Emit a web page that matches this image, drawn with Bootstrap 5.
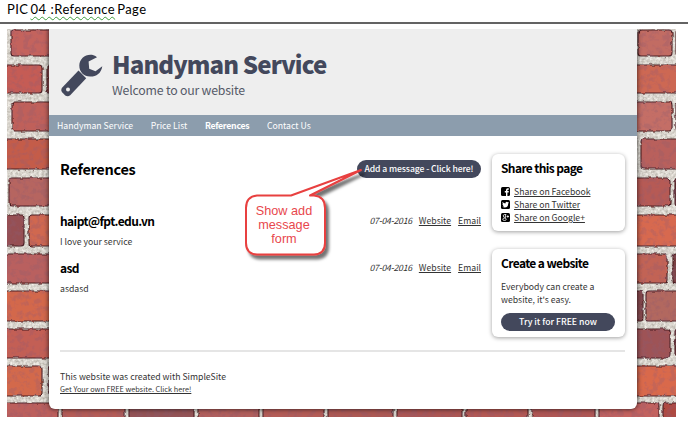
<!DOCTYPE html>
<html lang="en">
<head>
<meta charset="utf-8">
<meta name="viewport" content="width=device-width, initial-scale=1">
<title>Handyman Service - References</title>
<link href="https://cdn.jsdelivr.net/npm/bootstrap@5.3.0/dist/css/bootstrap.min.css" rel="stylesheet">
<style>
  body { width: 688px; height: 422px; overflow: hidden; background: #fff; color: #333; font: 8.7px/13px "Noto Sans CJK SC", "Open Sans", sans-serif; }
  a { color: #333; }
  .caption { height: 24px; border-bottom: 2px solid #636363; padding: 0 0 0 7px; font: 13px/18px Lato, sans-serif; letter-spacing: .4px; word-spacing: -1.6px; color: #000; }
  .caption .misspelt { text-decoration: underline wavy #3f9b3f 1px; text-underline-offset: 2px; }
  .stage { width: 669px; height: 388px; margin: 5px 0 0 7px; overflow: hidden; }
  .bricks { position: absolute; left: 0; top: 0; }
  .site { width: 588px; height: 380px; margin-left: 42px; border-radius: 0 0 6px 6px; box-shadow: 0 0 5px rgba(0,0,0,.75); }
  .masthead { height: 86px; background: #eee; padding: 24px 0 0 11px; }
  .masthead h1 { font: 800 24px/24px "Noto Sans CJK SC", sans-serif; letter-spacing: -.87px; color: #43485c; margin: -1px 0 0; }
  .tagline { font-size: 12.3px; line-height: 16px; margin-top: 6px; letter-spacing: -.2px; color: #555a68; }
  .topnav { height: 21px; background: #8c9dad; padding-left: 8px; gap: 17.6px; line-height: 21px; }
  .topnav a { color: #fff; text-decoration: none; }
  .topnav .fw-bold { letter-spacing: -.25px; }
  .page { height: 273px; padding: 18px 12px 0 11px; }
  h2 { font: 700 14.5px/20px "Noto Sans CJK SC", sans-serif; letter-spacing: -.3px; margin: 0; padding-top: 5px; color: #000; }
  h3 { font: 700 12px/16px "Noto Sans CJK SC", sans-serif; letter-spacing: -.58px; margin: 0; color: #000; }
  .main-col { width: 421px; }
  .upper { height: 197px; }
  .pill { background: #43485c; color: #fff; border-radius: 9px; height: 18px; line-height: 17px; font-weight: 500; text-decoration: none; text-align: center; }
  .add { width: 124px; margin-top: 6px; font-size: 8.6px; letter-spacing: -.08px; }
  .title-row { height: 59px; }
  .entry { height: 47px; }
  .entry .meta { gap: 7px; line-height: 16px; }
  .meta i { letter-spacing: -.22px; }
  .said { margin-top: 6px; }
  .side { width: 133px; gap: 18px; }
  .panel { border-radius: 6px; box-shadow: 0 1px 4px rgba(0,0,0,.38); padding: 6px 10px 0 9px; background: #fff; }
  .panel h3 { letter-spacing: -.62px; }
  .links, .blurb { margin-top: 9px; }
  .links a { letter-spacing: -.03px; }
  .try { margin-top: 7px; }
  .share { height: 77px; } .create { height: 88px; }
  .share svg { width: 9px; height: 9px; margin-right: 4px; }
  .foot { border-top: 2px solid #e5e5e5; padding-top: 18px; margin-top: -1px; }
  .foot a { font-size: 7.3px; }
  .callout { position: absolute; left: 233px; top: 131px; width: 112px; height: 106px; overflow: visible; }
  .callout text { font: 12.7px "Liberation Sans", Arial, sans-serif; fill: #e8474d; text-anchor: middle; }
</style>
</head>
<body>
<div class="caption">PIC <span class="misspelt">04 &nbsp;:Reference</span> Page</div>
<div class="stage position-relative">
  <svg class="bricks" width="669" height="388" viewBox="7 29 669 388" aria-hidden="true">
    <defs>
      <filter id="mortar" x="0" y="0" width="100%" height="100%">
        <feTurbulence type="fractalNoise" baseFrequency=".38" numOctaves="3" seed="8" result="n"/>
        <feColorMatrix in="n" type="matrix" values=".65 0 0 0 .37  .65 0 0 0 .34  .65 0 0 0 .29  0 0 0 0 1"/>
      </filter>
      <filter id="rough" filterUnits="userSpaceOnUse" x="7" y="29" width="669" height="388">
        <feTurbulence type="fractalNoise" baseFrequency=".17" numOctaves="3" seed="4" result="n"/>
        <feDisplacementMap in="SourceGraphic" in2="n" scale="3.5" xChannelSelector="R" yChannelSelector="G" result="b"/>
        <feColorMatrix in="n" type="matrix" values="0 0 0 0 .25  0 0 0 0 .1  0 0 0 0 .15  4 3 0 0 -3.3" result="spots"/>
        <feComposite in="spots" in2="b" operator="in" result="s"/>
        <feComponentTransfer in="s" result="s2"><feFuncA type="linear" slope=".3"/></feComponentTransfer>
        <feMerge><feMergeNode in="b"/><feMergeNode in="s2"/></feMerge>
      </filter>
    </defs>
    <rect x="7" y="29" width="669" height="388" filter="url(#mortar)"/>
    <g id="wall" filter="url(#rough)" stroke="#4a1f22" stroke-width="1.1"></g>
  </svg>
  <div class="site position-relative bg-white">
    <header class="masthead d-flex">
      <svg width="44" height="44" viewBox="0 0 44 44" aria-hidden="true">
        <path d="M33.5 2.2C26 .4 19.5 5.500 19.300 12.500C19.200 19 24 23.500 30 23.500C36 23.700 41.200 20.500 42.300 13.200L35.500 18.200L29.200 15.800L28.600 8.500L37 4.300Q35.500 2.700 33.500 2.200Z" fill="#43485c"/>
        <path d="M18.500 17.500L26.200 25.300L10.200 42.300Q7.800 44.200 5.200 42.500L2.200 39.300Q.2 36.800 2.500 34.300Z" fill="#43485c"/>
        <circle cx="8" cy="36.500" r="2" fill="#eee"/>
      </svg>
      <div class="ms-2">
        <h1>Handyman Service</h1>
        <div class="tagline">Welcome to our website</div>
      </div>
    </header>
    <nav class="topnav d-flex">
      <a href="#">Handyman Service</a><a href="#">Price List</a><a href="#" class="fw-bold">References</a><a href="#">Contact Us</a>
    </nav>
    <main class="page">
      <div class="upper d-flex">
        <div class="main-col">
          <div class="title-row d-flex justify-content-between align-items-start">
            <h2>References</h2>
            <a href="#" class="pill add">Add a message - Click here!</a>
          </div>
          <div class="entries">
            <div class="entry">
              <div class="d-flex justify-content-between"><h3>haipt@fpt.edu.vn</h3><div class="meta d-flex"><i>07-04-2016</i><a href="#">Website</a><a href="#">Email</a></div></div>
              <div class="said">I love your service</div>
            </div>
            <div class="entry">
              <div class="d-flex justify-content-between"><h3>asd</h3><div class="meta d-flex"><i>07-04-2016</i><a href="#">Website</a><a href="#">Email</a></div></div>
              <div class="said">asdasd</div>
            </div>
          </div>
        </div>
        <aside class="side d-flex flex-column ms-auto">
          <section class="panel share">
            <h3>Share this page</h3>
            <div class="links d-flex flex-column">
              <div class="d-flex align-items-center"><svg viewBox="0 0 9 9"><rect width="9" height="9" rx="1.500"/><path d="M5 9V5.500H3.800V4H5V3Q5 1.300 6.700 1.300H7.800V2.700H7Q6.400 2.700 6.400 3.200V4H7.800L7.600 5.500H6.400V9Z" fill="#fff"/></svg><a href="#">Share on Facebook</a></div>
              <div class="d-flex align-items-center"><svg viewBox="0 0 9 9"><rect width="9" height="9" rx="1.500"/><path d="M1.500 2Q2.800 3.400 4.400 3.400Q4.400 1.700 5.800 1.700Q6.400 1.700 6.900 2.200L7.800 1.900L7.300 2.800L7.900 2.700L7.200 3.500Q7.200 7.300 3.800 7.500Q2.300 7.500 1.200 6.800Q2.400 6.800 3 6.300Q2.100 6.100 1.900 5.400H2.400Q1.500 5 1.400 4L2 4.100Q1.100 3.200 1.500 2Z" fill="#fff"/></svg><a href="#">Share on Twitter</a></div>
              <div class="d-flex align-items-center"><svg viewBox="0 0 9 9"><rect width="9" height="9" rx="1.500"/><g fill="none" stroke="#fff" stroke-width=".8"><ellipse cx="3.500" cy="2.900" rx="1.200" ry="1.300"/><path d="M3.700 1.500H5.300M4.200 4.100L4.600 5"/><ellipse cx="3.500" cy="6.300" rx="1.700" ry="1.200"/><path d="M5.600 3.500H8M6.800 2.300V4.700"/></g></svg><a href="#">Share on Google+</a></div>
            </div>
          </section>
          <section class="panel create">
            <h3>Create a website</h3>
            <div class="blurb">Everybody can create a<br>website, it's easy.</div>
            <a href="#" class="pill try d-block">Try it for FREE now</a>
          </section>
        </aside>
      </div>
      <footer class="foot">
        <div class="made">This website was created with SimpleSite</div>
        <a href="#" class="d-block">Get Your own FREE website. Click here!</a>
      </footer>
    </main>
  </div>
  <svg class="callout" viewBox="240 160 112 106" aria-hidden="true">
    <defs><filter id="drop" x="-10%" y="-10%" width="130%" height="130%"><feDropShadow dx="3" dy="4" stdDeviation="1.500" flood-color="#000" flood-opacity=".55"/></filter></defs>
    <path filter="url(#drop)" d="M257 195.500H291L361 170L310 195.500H314Q325 196.500 325 208V243Q325 254 314 254.500H257Q246 254 246 243V208Q246 196.500 257 195.500Z" fill="#fff" stroke="#e8403f" stroke-width="2" stroke-linejoin="round"/>
    <text x="284" y="214.500">Show add</text><text x="284" y="229">message</text><text x="284" y="243">form</text>
  </svg>
</div>
<script src="https://cdn.jsdelivr.net/npm/bootstrap@5.3.0/dist/js/bootstrap.bundle.min.js"></script>
<script>
  // Each course: top, bottom, then [left, right, colour] bricks.
  const courses = [
    [29,55,[[10,54,'#c4645d'],[637,671,'#c26c64'],[675,690,'#603039']]],
    [64,92,[[0,41,'#c55c54'],[46,60,'#8c4547'],[630,690,'#cd6752']]],
    [101,130,[[11,60,'#c0615a'],[630,671,'#c46e66'],[675,690,'#93504c']]],
    [138,168,[[0,60,'#c45b48'],[640,690,'#b9615c']]],
    [177,205,[[8,60,'#b66560'],[630,669,'#b65a54'],[674,690,'#6a3235']]],
    [214,245,[[0,23,'#965053'],[28,60,'#d06850'],[630,690,'#d76950']]],
    [253,282,[[0,60,'#b9605e'],[630,666,'#c26355'],[672,690,'#7a4042']]],
    [290,320,[[0,60,'#d3674b'],[630,642,'#84464c'],[645,690,'#b2675f']]],
    [328,357,[[0,60,'#c35e54'],[630,669,'#9e5256'],[674,690,'#6d3a3f']]],
    [365,395,[[0,41,'#d3694b'],[48,60,'#7e474b'],[630,690,'#d9694c']]],
    [402,430,[[0,57,'#bc5f5b'],[61,124,'#b55c56'],[128,193,'#935356'],[197,258,'#b25f5c'],[262,323,'#b45c57'],[327,392,'#ac5853'],[396,461,'#ac5652'],[465,527,'#b45852'],[531,594,'#af5753'],[598,658,'#c3625f'],[662,690,'#ae483f']]]
  ];
  document.getElementById('wall').innerHTML = courses.map(([t, b, row]) =>
    row.map(([l, r, c]) => `<rect x="${l + 1}" y="${t + 1}" width="${r - l}" height="${b - t}" rx="3" fill="${c}"/>`).join('')).join('');
</script>
</body>
</html>
